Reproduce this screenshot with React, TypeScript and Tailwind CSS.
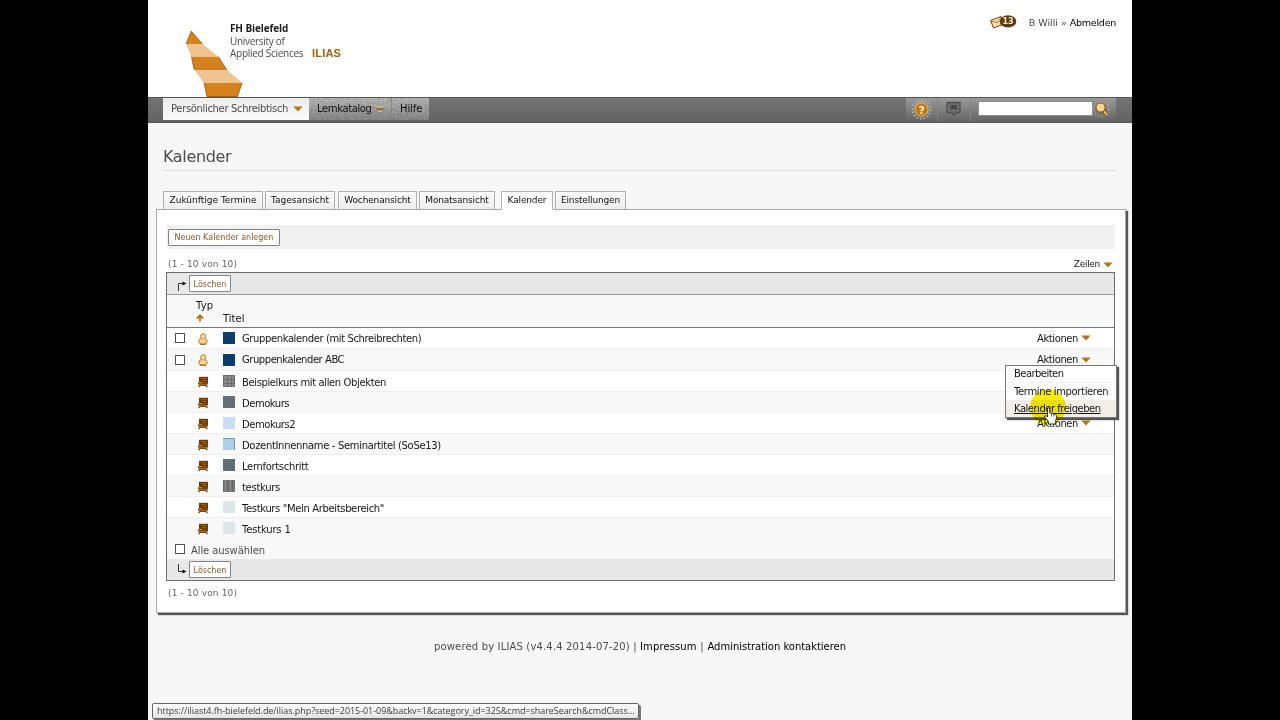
import { ReactNode } from 'react'
import { clsx } from 'clsx'

type Row = {
  title: string
  swatch: string
  height: string
  spacing: string
  kind: 'group' | 'course'
  actions?: boolean
  pattern?: 'grid' | 'stripes' | 'edge'
}

const rows: Row[] = [
  { title: 'Gruppenkalender (mit Schreibrechten)', swatch: 'bg-[#0d3d6b]', height: 'h-[21px]', spacing: 'tracking-[-0.39px]', kind: 'group', actions: true },
  { title: 'Gruppenkalender ABC', swatch: 'bg-[#0d3d6b]', height: 'h-[22px]', spacing: 'tracking-[-0.45px]', kind: 'group', actions: true },
  { title: 'Beispielkurs mit allen Objekten', swatch: 'bg-[#8c8c8c]', height: 'h-[21px]', spacing: 'tracking-[-0.38px]', kind: 'course', pattern: 'grid' },
  { title: 'Demokurs', swatch: 'bg-[#647174]', height: 'h-[21px]', spacing: 'tracking-[-0.48px]', kind: 'course' },
  { title: 'Demokurs2', swatch: 'bg-[#cbddf6]', height: 'h-[21px]', spacing: 'tracking-[-0.45px]', kind: 'course', actions: true },
  { title: 'DozentInnenname - Seminartitel (SoSe13)', swatch: 'bg-[#add2e5]', height: 'h-[21px]', spacing: 'tracking-[-0.33px]', kind: 'course', pattern: 'edge' },
  { title: 'Lernfortschritt', swatch: 'bg-[#5f6e72]', height: 'h-[21px]', spacing: 'tracking-[-0.33px]', kind: 'course' },
  { title: 'testkurs', swatch: 'bg-[#777777]', height: 'h-[21px]', spacing: 'tracking-[-0.3px]', kind: 'course', pattern: 'stripes' },
  { title: 'Testkurs "Mein Arbeitsbereich"', swatch: 'bg-[#dde6e6]', height: 'h-[21px]', spacing: 'tracking-[-0.36px]', kind: 'course' },
  { title: 'Testkurs 1', swatch: 'bg-[#dde6e6]', height: 'h-[21px]', spacing: 'tracking-[-0.18px]', kind: 'course' },
]

const tabs = [
  { label: 'Zukünftige Termine', width: 'w-[100px]', gap: 'mr-[2px]' },
  { label: 'Tagesansicht', width: 'w-[70px]', gap: 'mr-[3px]' },
  { label: 'Wochenansicht', width: 'w-[79px] tracking-[-0.15px]', gap: 'mr-[2px]' },
  { label: 'Monatsansicht', width: 'w-[76px] tracking-[-0.15px]', gap: 'mr-[6px]' },
  { label: 'Kalender', width: 'w-[52px] tracking-[-0.15px]', gap: 'mr-[2px]', active: true },
  { label: 'Einstellungen', width: 'w-[71px] tracking-[-0.15px]', gap: '' },
]

function Caret({ className }: { className?: string }) {
  return (
    <svg viewBox="0 0 10 6" className={clsx('h-[6px] w-[10px] shrink-0', className)}>
      <path d="M0.3 0.5H9.7L5 5.5Z" fill="#b5771c" />
    </svg>
  )
}

function Logo() {
  return (
    <svg viewBox="0 0 60 68" className="h-[68px] w-[60px] shrink-0">
      <path d="M7.3 2 L18.5 15 H2Z" fill="#d5811c" />
      <path d="M2 15 H18.5 L34.5 27.7 H7.5Z" fill="#efc490" />
      <path d="M7.5 27.7 H34.5 L42.5 40.3 H10Z" fill="#d5811c" />
      <path d="M10 40.3 H42.5 L58 54 H20Z" fill="#efc490" />
      <path d="M20 54 H58 L53.5 68 H23Z" fill="#d5811c" />
      <path d="M2 15 L7.3 2 L18.5 15 M7.5 27.7 L10 40.3 H42.5 L34.5 27.7 M20 54 L23 67.5 H53.5 L58 54" fill="none" stroke="#8c5212" strokeWidth="0.7" />
    </svg>
  )
}

function GroupIcon() {
  return (
    <svg viewBox="0 0 10 12" className="mt-px h-3 w-[10px]">
      <ellipse cx="5" cy="8.4" rx="4.1" ry="3" fill="#f4cf8f" stroke="#b2751e" strokeWidth="1" />
      <circle cx="5.2" cy="3.3" r="2.5" fill="#f9dfae" stroke="#b2751e" strokeWidth="1" />
      <path d="M3.4 5.9H7" stroke="#f9dfae" strokeWidth="0.8" />
      <path d="M2 11.2H8" stroke="#8c5712" strokeWidth="0.9" />
    </svg>
  )
}

function CourseIcon() {
  return (
    <svg viewBox="0 0 10 12" className="mt-0.5 h-3 w-[10px]">
      <path d="M1 0.8H10V7H1Z" fill="#6b3b04" />
      <path d="M3 2.7H8.4M5 4.6H8.4" stroke="#a3681a" strokeWidth="0.9" />
      <path d="M0 6.2H10V8.6H0Z" fill="#7d4809" />
      <path d="M0.6 6H4V7.2H0.6Z" fill="#c28432" />
      <path d="M2.6 8.5 L0.6 11.2 M7.4 8.5 L9.4 11.2 M2.6 9.3H7.4" stroke="#7d4809" strokeWidth="1.4" fill="none" />
    </svg>
  )
}

function Swatch({ row }: { row: Row }) {
  return (
    <span className={clsx('block h-3 w-3', row.swatch)}>
      {row.pattern === 'grid' && (
        <svg viewBox="0 0 12 12" className="size-3">
          <path d="M0.5 0.5H11.5V11.5H0.5ZM4.5 0V12M8.5 0V12M0 4.5H12M0 8.5H12" fill="none" stroke="#666666" strokeWidth="0.8" />
        </svg>
      )}
      {row.pattern === 'stripes' && (
        <svg viewBox="0 0 12 12" className="size-3">
          <path d="M0.5 0V12M4.5 0V12M9.5 0V12" stroke="#666666" />
          <path d="M2.5 0V12M7.5 0V12" stroke="#8a8a8a" />
        </svg>
      )}
      {row.pattern === 'edge' && (
        <svg viewBox="0 0 12 12" className="size-3">
          <path d="M0 0.5H11.5V12" stroke="#6f8791" strokeWidth="0.8" fill="none" />
        </svg>
      )}
    </span>
  )
}

function Checkbox() {
  return <span className="block size-[10px] shrink-0 border border-[#505050] bg-white" />
}

function Button({ children, className }: { children: ReactNode; className: string }) {
  return (
    <button className={clsx('flex h-[17px] items-center justify-center rounded-[1px] border border-[#858585] bg-white pt-0.5 text-[8px] whitespace-nowrap text-[#8a5a28]', className)}>
      {children}
    </button>
  )
}

function Header() {
  return (
    <header className="flex h-[97px] bg-white">
      <div className="flex pt-[29px] pl-[36px]">
        <Logo />
        <div className="-mt-[7px] ml-[-14px] w-[74px] font-['Open_Sans',sans-serif] text-[10px] leading-[12.5px] text-[#4a4a4a]">
          <p className="font-bold tracking-[-0.12px] whitespace-nowrap text-[#1c1c1c]">FH Bielefeld</p>
          <p className="tracking-[-0.3px] whitespace-nowrap">University of</p>
          <p className="tracking-[-0.27px] whitespace-nowrap">Applied Sciences</p>
        </div>
        <span className="mt-[18px] ml-[8px] font-['Liberation_Sans',sans-serif] text-[11px] leading-[13px] font-bold tracking-[0.2px] text-[#a06008]">ILIAS</span>
      </div>
      <div className="ml-auto flex h-[46px] items-center pr-[16px]">
        <svg viewBox="0 0 28 16" className="mt-[-3px] mr-[12px] h-4 w-7">
          <path d="M1.5 6.5 L12 2.5 L15 10 L4.5 14Z" fill="#f9dba7" stroke="#6b4316" strokeWidth="1" />
          <path d="M2 7 L8.5 8.6 L12 3" fill="none" stroke="#9a6a2c" strokeWidth="0.8" />
          <ellipse cx="19" cy="7.4" rx="8.3" ry="6.2" fill="#5d3a14" />
          <text x="19" y="10.2" textAnchor="middle" fontSize="8" fontWeight="bold" fontFamily="DejaVu Sans, sans-serif" fill="#fbe6c0">13</text>
        </svg>
        <span className="text-[9.5px] whitespace-nowrap text-[#4a4a4a]">
          B Willi » <span className="tracking-[-0.25px] text-black">Abmelden</span>
        </span>
      </div>
    </header>
  )
}

function Noise({ className }: { className: string }) {
  return (
    <svg className={className} preserveAspectRatio="none">
      <defs>
        <filter id="grain">
          <feTurbulence type="fractalNoise" baseFrequency="0.45" numOctaves="2" />
          <feColorMatrix type="matrix" values="0.9 0 0 0 0.1  0.9 0 0 0 0.1  0.9 0 0 0 0.1  0 0 0 0 0.35" />
        </filter>
      </defs>
      <rect width="100%" height="100%" filter="url(#grain)" />
    </svg>
  )
}

function MainMenu() {
  return (
    <nav className="flex h-[26px] border-t border-b border-t-[#565656] border-b-[#555555] bg-linear-to-b from-[#747474] to-[#636363] pl-[15px]">
      <div className="flex h-[22px] w-[146px] items-center bg-linear-to-b from-[#ececec] to-[#fafafa] pb-px pl-2 text-[10px] text-[#4c4c4c]">
        <span className="tracking-[-0.34px] whitespace-nowrap">Persönlicher Schreibtisch</span>
        <Caret className="ml-[5px] h-[4px] w-[7px]" />
      </div>
      <div className="relative flex h-[22px] w-[120px] items-center bg-linear-to-b from-[#a6a6a6] to-[#606060] pb-px text-[10px] text-[#111111]">
        <Noise className="absolute inset-0 h-full w-full" />
        <div className="relative flex h-full w-[83px] items-center border-r border-[#858585] pl-[8px]">
          <span className="tracking-[-0.4px]">Lernkatalog</span>
          <svg viewBox="0 0 10 6" className="ml-[4px] h-[6px] w-[10px]">
            <path d="M0 0.5H10M3 5.5H7" stroke="#f0b95a" />
            <path d="M1 3H9" stroke="#7d5620" />
          </svg>
        </div>
        <span className="relative pl-[8px] tracking-[-0.1px]">Hilfe</span>
      </div>
      <div className="relative mr-4 ml-auto flex h-[23px] w-[210px] items-center bg-linear-to-b from-[#9b9b9b] to-[#656565]">
        <svg viewBox="0 0 72 23" className="h-[23px] w-[72px] shrink-0">
          <path d="M31.5 0V23M64.5 0V23" stroke="#858585" />
          <circle cx="15.5" cy="11.5" r="9" fill="none" stroke="#b9b4a5" strokeWidth="2" strokeDasharray="1.5 2" />
          <circle cx="15.5" cy="11.5" r="6.6" fill="#c47a12" stroke="#e5bc77" strokeWidth="1" />
          <text x="15.8" y="15.5" textAnchor="middle" fontSize="11" fontWeight="bold" fontFamily="DejaVu Sans, sans-serif" fill="#fff2d8">?</text>
          <path d="M41 4.5H54V14.5H50L48 17.5L46 14.5H41Z" fill="#6f6f6f" stroke="#505050" strokeWidth="1.3" />
          <path d="M44.5 7H51V11.5H44.5Z" fill="#484848" />
        </svg>
        <span className="mt-[-2px] h-[15px] w-[115px] border border-[#8d8d8d] bg-white" />
        <svg viewBox="0 0 20 20" className="size-5 shrink-0">
          <circle cx="8.5" cy="9" r="7.5" fill="none" stroke="#aaa595" strokeWidth="1.5" strokeDasharray="1.5 2" />
          <path d="M10 10L14 15" stroke="#774711" strokeWidth="3.6" />
          <path d="M10 10L14 15" stroke="#f5c77c" strokeWidth="2" />
          <circle cx="7.6" cy="7.6" r="4.6" fill="#f8d493" stroke="#8e570f" strokeWidth="1.2" />
        </svg>
      </div>
    </nav>
  )
}

function Tabs() {
  return (
    <div className="relative z-10 flex h-[19px] pl-[15px] text-[9px] font-medium text-[#111111]">
      {tabs.map((tab) => (
        <div
          key={tab.label}
          className={clsx(
            'flex items-center justify-center border border-[#b0b0b0] whitespace-nowrap',
            tab.active ? 'h-[19px] border-b-white bg-white' : 'h-[18px] border-b-0 bg-linear-to-b from-[#fbfbfb] to-[#ededed]',
            tab.width,
            tab.gap,
          )}
        >
          {tab.label}
        </div>
      ))}
    </div>
  )
}

function ActionsMenu() {
  return (
    <>
      <div className="absolute top-[37px] left-[838px] z-20 h-[53px] w-[112px] border border-[#777777] bg-white text-[10px] text-[#161616] shadow-[2px_2px_1px_#555555]">
        <p className="flex h-[16px] items-center pb-0.5 pl-[8px] tracking-[-0.55px]">Bearbeiten</p>
        <p className="flex h-[18px] items-center border-t border-[#f2f2f2] pl-[8px] tracking-[-0.36px] whitespace-nowrap">Termine importieren</p>
        <p className="flex h-[17px] items-center bg-[#f3ede7] pl-[8px] tracking-[-0.48px] whitespace-nowrap">
          <span className="underline underline-offset-1">Kalender freigeben</span>
        </p>
      </div>
      <svg viewBox="0 0 40 40" className="absolute top-[59px] left-[861px] z-30 size-10 mix-blend-multiply">
        <circle cx="20" cy="20" r="17.8" fill="#f6ec00" />
      </svg>
      <svg viewBox="0 0 14 18" className="absolute top-[79px] left-[876px] z-40 h-[18px] w-[15px]">
        <path d="M4 1.5Q5.2 0 6.2 1.5V6L8 6.2L10.2 6.8L12 7.6Q13.4 8.3 13.2 10.5L11.8 14.5V17H5V14.5L1 10Q1 8 3 9L4 10Z" fill="#fff" stroke="#222" strokeWidth="0.9" />
        <path d="M8 7V9.5M10.2 7.3V9.5" stroke="#222" strokeWidth="0.7" />
      </svg>
    </>
  )
}

function CalendarTable() {
  return (
    <div className="h-[309px] w-[949px] border border-[#6f6f6f] text-[10px] text-[#161616]">
      <div className="flex h-[22px] items-center border-b border-[#999999] bg-[#e8e8e8] pl-[10px]">
        <svg viewBox="0 0 12 12" className="mt-[5px] h-3 w-3">
          <path d="M1.5 11V3.5H7" fill="none" stroke="#333" />
          <path d="M5.5 1.4V5.6L9.5 3.5Z" fill="#111" />
        </svg>
        <Button className="w-[42px]">Löschen</Button>
      </div>
      <div className="flex h-[33px] border-b border-[#777777] bg-[#f8f8f8] pl-[29px] leading-[13px]">
        <div className="w-[27px] pt-[4px]">
          <p className="tracking-[0.2px]">Typ</p>
          <svg viewBox="0 0 8 8" className="mt-0.5 size-2">
            <path d="M4 7.5V2M0.8 4.6L4 1.2L7.2 4.6" fill="none" stroke="#b06d12" strokeWidth="1.7" />
          </svg>
        </div>
        <p className="pt-[17px]">Titel</p>
      </div>
      <div className="relative">
        {rows.map((row, i) => (
          <div
            key={row.title}
            className={clsx('flex items-center border-b pl-2', row.height, i % 2 ? 'bg-[#f8f8f8]' : 'bg-white', i === 9 ? 'border-[#f8f8f8]' : 'border-[#efefef]')}
          >
            <div className="w-[23px]">{row.kind === 'group' && <Checkbox />}</div>
            <div className="w-[25px]">{row.kind === 'group' ? <GroupIcon /> : <CourseIcon />}</div>
            <Swatch row={row} />
            <span className={clsx('ml-[7px] whitespace-nowrap', row.spacing, row.kind === 'course' && 'mt-0.5')}>{row.title}</span>
            {row.actions && (
              <span className="mr-[23px] ml-auto flex items-center">
                <span className="tracking-[-0.42px]">Aktionen</span>
                <Caret className="ml-[3px]" />
              </span>
            )}
          </div>
        ))}
        <ActionsMenu />
      </div>
      <div className="flex h-[20px] items-center bg-[#f8f8f8] pl-2 text-[#4c4c4c]">
        <Checkbox />
        <span className="mt-0.5 ml-[6px] tracking-[-0.1px]">Alle auswählen</span>
      </div>
      <div className="flex h-[21px] items-center bg-[#e8e8e8] pl-[10px]">
        <svg viewBox="0 0 12 12" className="h-3 w-3">
          <path d="M1.5 0V7.5H7" fill="none" stroke="#333" />
          <path d="M5.5 5.4V9.6L9.5 7.5Z" fill="#111" />
        </svg>
        <Button className="w-[42px]">Löschen</Button>
      </div>
    </div>
  )
}

export default function App() {
  return (
    <div className="flex h-[720px] w-[1280px] justify-center overflow-hidden bg-black font-['DejaVu_Sans',sans-serif]">
      <div className="relative flex h-full w-[984px] flex-col bg-[#f7f7f7]">
        <Header />
        <MainMenu />
        <h1 className="mr-4 ml-[15px] h-[48px] border-b border-[#dddddd] pt-[22px] text-[16px] leading-[24px] tracking-[-0.35px] text-[#4c4c4c]">Kalender</h1>
        <div className="h-5" />
        <Tabs />
        <main className="-mt-px ml-2 h-[404px] w-[970px] border border-[#a9a9a9] bg-white pt-[15px] pl-[10px] shadow-[2px_2px_1px_#555555]">
          <div className="flex h-[24px] w-[948px] items-center bg-[#f1f1f1] pl-px">
            <Button className="w-[112px]">Neuen Kalender anlegen</Button>
          </div>
          <div className="flex h-[23px] w-[948px] items-center justify-between pt-[8px] pr-[2px] pl-px text-[9px]">
            <span className="tracking-[0.15px] text-[#666666]">(1 - 10 von 10)</span>
            <span className="flex items-center text-[#161616]">
              <span className="tracking-[-0.3px]">Zeilen</span>
              <Caret className="ml-[3px]" />
            </span>
          </div>
          <div className="-ml-px">
            <CalendarTable />
          </div>
          <p className="mt-[5px] ml-px text-[9px] leading-[14px] tracking-[0.15px] text-[#666666]">(1 - 10 von 10)</p>
        </main>
        <footer className="mt-[26px] text-center text-[10px] leading-[16px] text-[#4c4c4c]">
          <span className="tracking-[0.16px]">powered by ILIAS (v4.4.4 2014-07-20) | </span>
          <span className="tracking-[0.1px] text-black">Impressum</span>
          <span className="tracking-[0.4px]"> | </span>
          <span className="tracking-[-0.03px] text-black">Administration kontaktieren</span>
        </footer>
        <div className="absolute top-[703px] left-1 flex h-4 w-[487px] items-center rounded-[2px] border border-[#666666] bg-linear-to-b from-white to-[#e4e4e4] pl-1 font-['Open_Sans',sans-serif] text-[9px] tracking-[-0.05px] whitespace-nowrap text-[#3c3c3c] shadow-[2px_2px_0_#777777]">
          https://iliast4.fh-bielefeld.de/ilias.php?seed=2015-01-09&amp;backv=1&amp;category_id=325&amp;cmd=shareSearch&amp;cmdClass...
        </div>
      </div>
    </div>
  )
}
